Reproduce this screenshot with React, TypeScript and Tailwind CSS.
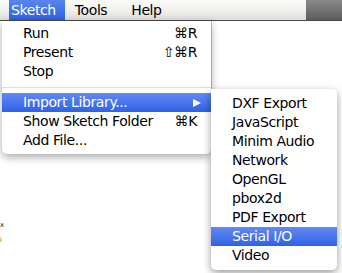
import React from "react";

const font = { fontFamily: '"DejaVu Sans", "Liberation Sans", sans-serif' };

function Arrow() {
  return (
    <svg width="8" height="8" viewBox="0 0 8 8" className="block">
      <polygon points="0,0 8,4 0,8" fill="#ffffff" />
    </svg>
  );
}

type Item = { label: string; shortcut?: string; hl?: boolean; arrow?: boolean };

function Row({ item, pl, pr }: { item: Item; pl: string; pr: string }) {
  return (
    <div
      className={`flex h-[19px] items-center justify-between ${pl} ${pr} ${
        item.hl ? "bg-gradient-to-b from-[#6189f1] to-[#2f61e6] text-white" : "text-black"
      }`}
    >
      <span>{item.label}</span>
      {item.shortcut && <span>{item.shortcut}</span>}
      {item.arrow && <Arrow />}
    </div>
  );
}

export default function App() {
  const main1: Item[] = [
    { label: "Run", shortcut: "⌘R" },
    { label: "Present", shortcut: "⇧⌘R" },
    { label: "Stop" },
  ];
  const main2: Item[] = [
    { label: "Import Library...", hl: true, arrow: true },
    { label: "Show Sketch Folder", shortcut: "⌘K" },
    { label: "Add File..." },
  ];
  const sub: Item[] = [
    { label: "DXF Export" },
    { label: "JavaScript" },
    { label: "Minim Audio" },
    { label: "Network" },
    { label: "OpenGL" },
    { label: "pbox2d" },
    { label: "PDF Export" },
    { label: "Serial I/O", hl: true },
    { label: "Video" },
  ];
  return (
    <div
      className="relative h-[273px] w-[342px] overflow-hidden bg-white text-[14px] tracking-[-0.4px]"
      style={font}
    >
      {/* menu bar */}
      <div className="flex h-[21px] border-b border-[#4a4a4a] bg-gradient-to-b from-[#fbfbfb] via-[#f2f0ec] to-[#dedddb]">
        <div className="flex flex-1 items-center pl-[9px]">
          <div className="flex h-full items-center bg-gradient-to-b from-[#5a85f0] to-[#2d5fe3] pl-[2px] pr-[9px] text-white">
            Sketch
          </div>
          <div className="pl-[10px]">Tools</div>
          <div className="pl-[24px]">Help</div>
        </div>
        <div className="w-[36px] bg-gradient-to-b from-[#8a8a8a] to-[#5c5c5c]" />
      </div>

      {/* background window bits */}
      <div className="absolute left-0 top-[218px] text-[7px] leading-[15px] text-[#222]">
        <div>x</div>
        <div className="text-[#b85a00]">i</div>
      </div>
      <div className="absolute left-[211px] top-[21px] h-[68px] w-px bg-[#c8c8c8]" />

      {/* main menu */}
      <div className="absolute left-[2px] top-[21px] w-[209px] rounded-b-[5px] bg-white pb-[4px] pt-[3px] shadow-[0_3px_8px_rgba(0,0,0,0.35)]">
        {main1.map((it) => (
          <Row key={it.label} item={it} pl="pl-[21px]" pr="pr-[14px]" />
        ))}
        <div className="flex h-[12px] items-center">
          <div className="h-px w-full bg-[#dcdcdc]" />
        </div>
        {main2.map((it) => (
          <Row key={it.label} item={it} pl="pl-[21px]" pr={it.arrow ? "pr-[10px]" : "pr-[14px]"} />
        ))}
      </div>

      {/* submenu */}
      <div className="absolute left-[211px] top-[89px] w-[126px] rounded-[5px] rounded-tl-none bg-white pb-[5px] pt-[5px] shadow-[0_3px_9px_rgba(0,0,0,0.4)]">
        {sub.map((it) => (
          <Row key={it.label} item={it} pl="pl-[21px]" pr="pr-[10px]" />
        ))}
      </div>
    </div>
  );
}
